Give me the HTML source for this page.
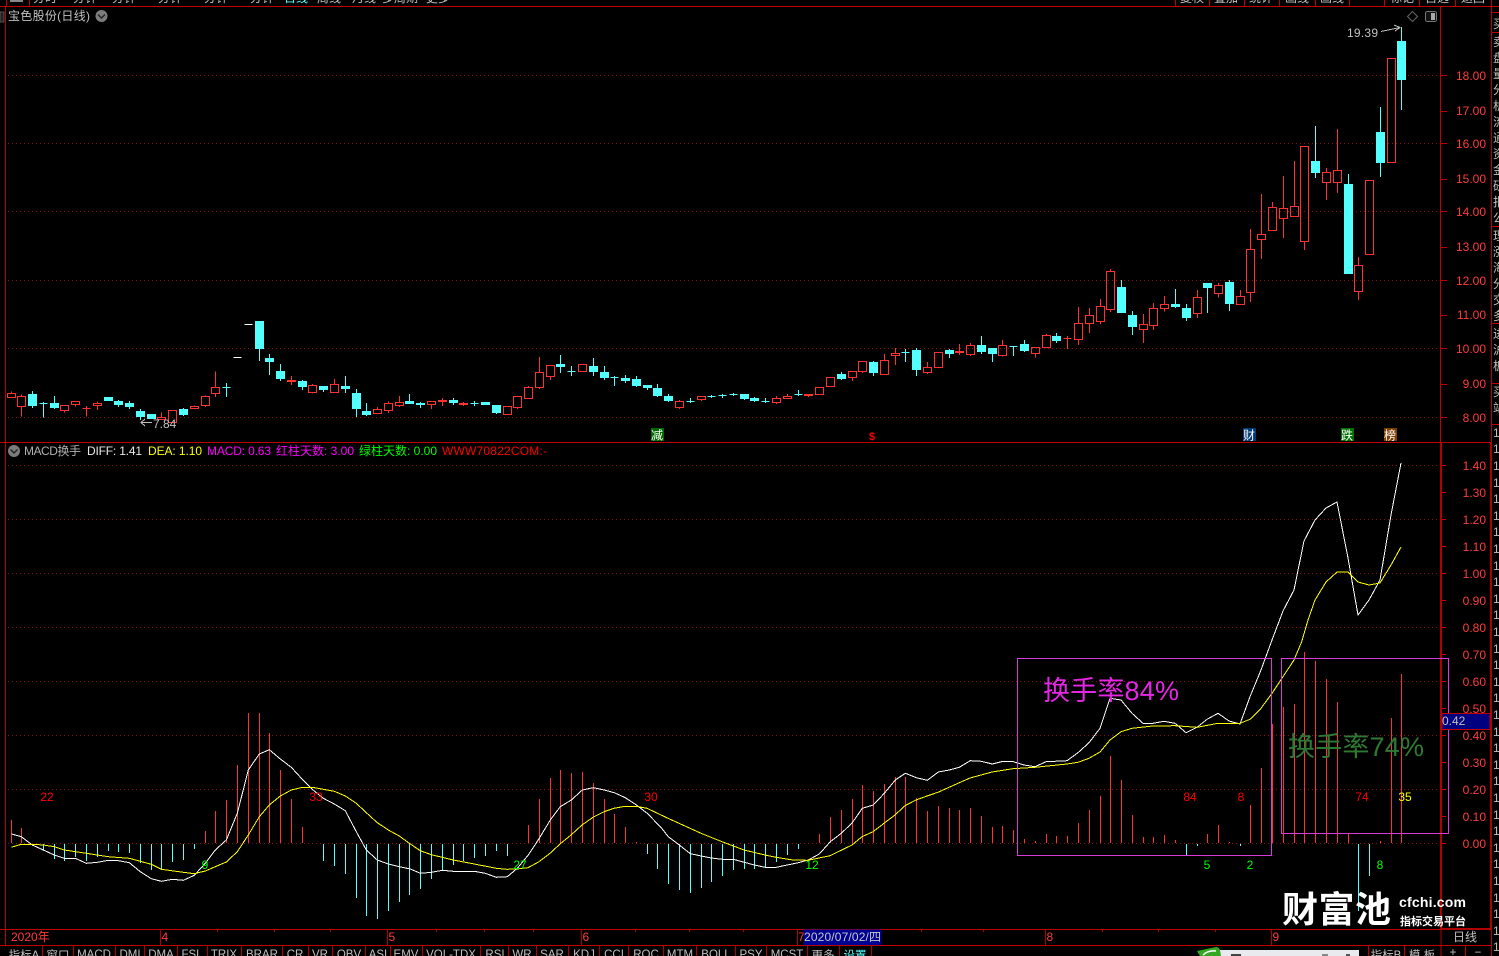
<!DOCTYPE html>
<html><head><meta charset="utf-8"><title>宝色股份</title>
<style>
html,body{margin:0;padding:0;background:#000;width:1499px;height:956px;overflow:hidden}
svg{display:block;position:absolute;left:0;top:0}
text{font-family:"Liberation Sans","WenQuanYi Zen Hei","Noto Sans CJK SC",sans-serif;font-size:12px}
.ax text{fill:#ff3c3c;text-anchor:end}
.tb text{fill:#c0c0c0;text-anchor:middle;font-size:11.5px}
.n text{font-size:12px;text-anchor:middle}
</style></head><body>
<svg width="1499" height="956" viewBox="0 0 1499 956" xmlns="http://www.w3.org/2000/svg" shape-rendering="crispEdges">
<rect width="1499" height="956" fill="#000"/>
<!-- grid -->
<path d="M8 75.5H1438M8 143.5H1438M8 211.5H1438M8 280.5H1438M8 348.5H1438M8 417.5H1438M8 465.5H1438M8 519.5H1438M8 573.5H1438M8 627.5H1438M8 681.5H1438M8 735.5H1438M8 789.5H1438M8 843.5H1438" stroke="#8a1010" stroke-dasharray="1 3" fill="none"/>
<!-- frame -->
<path d="M0 6.5H1499M5.5 7V945M0 442.5H1491M0 929.5H1491M0 945.5H1491M1440.5 7V442M1491.5 0V956M1441 945V956M1465.5 945V956M1404.5 945V956M1368.5 945V956M6.5 0V6M29.5 0V6M1175.5 0V6M1209.5 0V6M1244.5 0V6M1279.5 0V6M1315.5 0V6M1349.5 0V6M1384.5 0V6M1419.5 0V6M1455.5 0V6M1491.5 12.5H1499M1491.5 32.5H1499M1491.5 226.5H1499M1491.5 323.5H1499M1491.5 383.5H1499M1491.5 424.5H1499" stroke="#c00000" fill="none"/>
<path d="M1441 443V929M1491 443V929M1441 929H1491" stroke="#b00000" stroke-width="2" fill="none"/>
<path d="M42.5 945V956M73.5 945V956M115.5 945V956M144.5 945V956M177.5 945V956M207.5 945V956M241.5 945V956M282.5 945V956M308.5 945V956M332.5 945V956M365.5 945V956M390.5 945V956M422.5 945V956M480.5 945V956M508.5 945V956M536.5 945V956M568.5 945V956M599.5 945V956M628.5 945V956M663.5 945V956M696.5 945V956M735.5 945V956M766.5 945V956M807.5 945V956M839.5 945V956M871.5 945V956M160.5 930V945M387.5 930V945M581.5 930V945M797.5 930V945M1045.5 930V945M1271.5 930V945M1441 930V945M217.5 930V932M274.5 930V932M330.5 930V932M436.5 930V932M484.5 930V932M533.5 930V932M635.5 930V932M689.5 930V932M743.5 930V932M921.5 930V932M983.5 930V932M1102.5 930V932M1158.5 930V932M1215.5 930V932" stroke="#b00000" fill="none"/>
<!-- axis ticks -->
<path d="M1441 75.5h6M1441 111.5h6M1441 143.5h6M1441 179.5h6M1441 211.5h6M1441 247.5h6M1441 280.5h6M1441 315.5h6M1441 348.5h6M1441 384.5h6M1441 417.5h6M1442 465.5h4M1442 492.5h4M1442 519.5h4M1442 546.5h4M1442 573.5h4M1442 600.5h4M1442 627.5h4M1442 654.5h4M1442 681.5h4M1442 708.5h4M1442 735.5h4M1442 762.5h4M1442 789.5h4M1442 816.5h4M1442 843.5h4" stroke="#c00000" fill="none"/>
<!-- red candles -->
<path fill="none" stroke="#ff3232" d="M11.5 391.5V393.5M7.5 393.5h8v4h-8zM21.5 394.5V396.5M21.5 406.5V416.5M17.5 396.5h8v10h-8zM64.5 410.5V412.5M60.5 405.5h8v5h-8zM75.5 404.5V406.5M71.5 401.5h8v3h-8zM82.5 408.5h8M86.5 406V416.5M97.5 401.5V403.5M97.5 405.5V410M93.5 403.5h8v2h-8zM161.5 412.5V417.5M157.5 417.5h8v2h-8zM168.5 410.5h8v12h-8zM194.5 405.5V406.5M190.5 406.5h8v2h-8zM205.5 395.5V396.5M205.5 405.5V407M201.5 396.5h8v9h-8zM215.5 371.5V387.5M215.5 393.5V397M211.5 387.5h8v6h-8zM291.5 376V385M287.5 380.5h8v1h-8zM312.5 384V385.5M312.5 392.5V393.5M308.5 385.5h8v7h-8zM334.5 379V384.5M330.5 384.5h8v8h-8zM377.5 407V409.5M373.5 409.5h8v4h-8zM388.5 401.5V403.5M388.5 410.5V413M384.5 403.5h8v7h-8zM399.5 396V402.5M399.5 405.5V407M395.5 402.5h8v3h-8zM431.5 404.5V409M427.5 401.5h8v3h-8zM442.5 398V406M438.5 400.5h8v1h-8zM463.5 402V406M459.5 403.5h8v1h-8zM507.5 406.5h-4v8h8v-8zM517.5 407.5V409M513.5 396.5h8v11h-8zM528.5 386V387.5M524.5 387.5h8v11h-8zM539.5 357V372.5M539.5 387.5V389M535.5 372.5h8v15h-8zM550.5 376.5V380M546.5 365.5h8v11h-8zM578.5 364.5h8v7h-8zM679.5 400V401.5M679.5 407.5V409M675.5 401.5h8v6h-8zM701.5 399.5V401M697.5 396.5h8v3h-8zM776.5 396V398.5M776.5 402.5V404M772.5 398.5h8v4h-8zM787.5 394V396.5M783.5 396.5h8v2h-8zM808.5 394.5V397M804.5 394.5h8v1h-8zM815.5 387.5h8v7h-8zM826.5 377.5h8v9h-8zM852.5 377.5V381M848.5 371.5h8v6h-8zM862.5 371.5V373M858.5 361.5h8v10h-8zM884.5 354V360.5M880.5 360.5h8v14h-8zM895.5 348V353.5M895.5 355.5V365M891.5 353.5h8v2h-8zM927.5 362V367.5M927.5 372.5V374M923.5 367.5h8v5h-8zM934.5 352.5h8v15h-8zM959.5 344V355M955.5 351.5h8v1h-8zM970.5 343V345.5M970.5 354.5V356M966.5 345.5h8v9h-8zM1002.5 340V345.5M1002.5 355.5V356.5M998.5 345.5h8v10h-8zM1035.5 353.5V357.5M1031.5 347.5h8v6h-8zM1046.5 334V335.5M1042.5 335.5h8v12h-8zM1067.5 336V349M1063.5 338.5h8M1078.5 307V323.5M1078.5 339.5V345M1074.5 323.5h8v16h-8zM1089.5 308V315.5M1089.5 323.5V333M1085.5 315.5h8v8h-8zM1100.5 299V306.5M1100.5 321.5V324M1096.5 306.5h8v15h-8zM1110.5 269V271.5M1110.5 309.5V312M1106.5 271.5h8v38h-8zM1143.5 314V324.5M1143.5 329.5V343M1139.5 324.5h8v5h-8zM1153.5 303V308.5M1153.5 325.5V330M1149.5 308.5h8v17h-8zM1164.5 296V304.5M1164.5 308.5V311.5M1160.5 304.5h8v4h-8zM1197.5 290V297.5M1197.5 313.5V318M1193.5 297.5h8v16h-8zM1218.5 283V285.5M1218.5 293.5V297.5M1214.5 285.5h8v8h-8zM1240.5 290V296.5M1236.5 296.5h8v8h-8zM1250.5 229V249.5M1250.5 292.5V302M1246.5 249.5h8v43h-8zM1261.5 194V234.5M1261.5 239.5V259M1257.5 234.5h8v5h-8zM1272.5 202V207.5M1268.5 207.5h8v23h-8zM1283.5 176V208.5M1283.5 218.5V238M1279.5 208.5h8v10h-8zM1294.5 161V206.5M1290.5 206.5h8v10h-8zM1304.5 241.5V250M1300.5 146.5h8v95h-8zM1326.5 168V172.5M1326.5 182.5V200M1322.5 172.5h8v10h-8zM1337.5 129V170.5M1337.5 182.5V193M1333.5 170.5h8v12h-8zM1358.5 257V265.5M1358.5 291.5V300M1354.5 265.5h8v26h-8zM1365.5 180.5h8v74h-8zM1387.5 58.5h8v104h-8z"/>
<!-- cyan candles -->
<path fill="#54ffff" stroke="#54ffff" d="M32.5 391V408M28.5 394.5h8v11h-8zM43.5 402V417.5M39.5 403.5h8M54.5 396V409M50.5 403.5h8v4h-8zM104.5 397.5h8v3h-8zM118.5 400V407M114.5 401.5h8v3h-8zM129.5 401V409M125.5 403.5h8v3h-8zM140.5 409V420M136.5 411.5h8v5h-8zM147.5 414.5h8v4h-8zM183.5 408V416M179.5 409.5h8v5h-8zM226.5 383V397M222.5 387.5h8M259.5 321V361M255.5 321.5h8v27h-8zM269.5 354V375M265.5 358.5h8v3h-8zM280.5 364V381M276.5 371.5h8v7h-8zM302.5 380V390M298.5 381.5h8v5h-8zM323.5 386V392M319.5 386.5h8v3h-8zM345.5 376V393M341.5 386.5h8v2h-8zM356.5 389V417M352.5 393.5h8v15h-8zM366.5 403V416M362.5 411.5h8v3h-8zM409.5 394V404M405.5 401.5h8v2h-8zM420.5 402V408M416.5 403.5h8v1h-8zM453.5 398V405M449.5 400.5h8v2h-8zM474.5 401V406M470.5 403.5h8M481.5 402.5h8v2h-8zM496.5 405V414M492.5 405.5h8v7h-8zM560.5 355V373M556.5 364.5h8v2h-8zM571.5 366V376M567.5 371.5h8M593.5 358V376M589.5 366.5h8v5h-8zM604.5 366V380M600.5 372.5h8v5h-8zM614.5 376V386M610.5 377.5h8M625.5 375V383M621.5 378.5h8v2h-8zM636.5 376V387M632.5 379.5h8v6h-8zM647.5 385V390M643.5 385.5h8v2h-8zM657.5 384V397M653.5 388.5h8v7h-8zM668.5 394V402M664.5 396.5h8v4h-8zM690.5 398V403M686.5 401.5h8M711.5 395V398M707.5 396.5h8M722.5 394V398M718.5 395.5h8M733.5 393V396M729.5 394.5h8M744.5 394V400M740.5 394.5h8v4h-8zM754.5 397V402M750.5 398.5h8v2h-8zM765.5 398V403M761.5 401.5h8M798.5 390V396M794.5 394.5h8M841.5 372V380M837.5 374.5h8v4h-8zM873.5 361V376M869.5 362.5h8v10h-8zM905.5 349V362M901.5 352.5h8M916.5 348V376M912.5 350.5h8v19h-8zM949.5 349V358M945.5 350.5h8v3h-8zM981.5 336V354M977.5 345.5h8v6h-8zM992.5 348V362M988.5 348.5h8v5h-8zM1013.5 346V356M1009.5 346.5h8M1024.5 340V352M1020.5 344.5h8v6h-8zM1056.5 333V343M1052.5 336.5h8v4h-8zM1121.5 280V313M1117.5 287.5h8v25h-8zM1132.5 311V335M1128.5 315.5h8v11h-8zM1175.5 289V308M1171.5 304.5h8v2h-8zM1186.5 304V321M1182.5 308.5h8v9h-8zM1207.5 283V313M1203.5 283.5h8v4h-8zM1229.5 280V311M1225.5 282.5h8v21h-8zM1315.5 126V178M1311.5 161.5h8v11h-8zM1348.5 174V274M1344.5 184.5h8v89h-8zM1380.5 107V177M1376.5 132.5h8v30h-8zM1401.5 27V110M1397.5 41.5h8v38h-8z"/>
<path stroke="#fff" fill="none" d="M233.5 357.5h8M244.5 324.5h8"/>
<!-- MACD bars red -->
<path stroke="#ff3232" fill="none" d="M11.5 843V820M21.5 843V828M205.5 843V831M215.5 843V811M226.5 843V800M237.5 843V765M248.5 843V713M259.5 843V713M269.5 843V733M280.5 843V770M291.5 843V799M302.5 843V827M528.5 843V825M539.5 843V799M550.5 843V778M560.5 843V770M571.5 843V773M582.5 843V772M593.5 843V783M604.5 843V799M614.5 843V814M625.5 843V827M636.5 843V842M819.5 843V834M830.5 843V817M841.5 843V810M852.5 843V799M862.5 843V785M873.5 843V791M884.5 843V784M895.5 843V777M905.5 843V777M916.5 843V798M927.5 843V811M938.5 843V806M949.5 843V808M959.5 843V810M970.5 843V808M981.5 843V816M992.5 843V827M1002.5 843V826M1013.5 843V830M1024.5 843V839M1035.5 843V841M1046.5 843V834M1056.5 843V836M1067.5 843V836M1078.5 843V823M1089.5 843V810M1100.5 843V796M1110.5 843V756M1121.5 843V780M1132.5 843V815M1143.5 843V837M1153.5 843V837M1164.5 843V835M1175.5 843V840M1207.5 843V834M1218.5 843V825M1229.5 843V842M1250.5 843V805M1261.5 843V768M1272.5 843V724M1283.5 843V707M1294.5 843V704M1304.5 843V652M1315.5 843V661M1326.5 843V679M1337.5 843V702M1348.5 843V834M1380.5 843V841M1391.5 843V718M1401.5 843V674"/>
<path stroke="#ff3232" stroke-width="2" d="M1272 843V724" fill="none"/>
<!-- MACD bars cyan -->
<path stroke="#54ffff" fill="none" d="M43.5 844V850M54.5 844V859M64.5 844V861M75.5 844V857M86.5 844V861M97.5 844V857M108.5 844V851M118.5 844V852M129.5 844V853M140.5 844V863M151.5 844V870M161.5 844V870M172.5 844V862M183.5 844V860M194.5 844V849M323.5 844V861M334.5 844V866M345.5 844V874M356.5 844V898M366.5 844V916M377.5 844V919M388.5 844V911M399.5 844V902M409.5 844V895M420.5 844V889M431.5 844V879M442.5 844V870M453.5 844V865M463.5 844V861M474.5 844V858M485.5 844V856M496.5 844V851M507.5 844V856M647.5 844V854M657.5 844V869M668.5 844V884M679.5 844V890M690.5 844V893M701.5 844V888M711.5 844V882M722.5 844V876M733.5 844V870M744.5 844V869M754.5 844V869M765.5 844V868M776.5 844V862M787.5 844V855M798.5 844V849M1186.5 844V855M1197.5 844V846M1240.5 844V846M1358.5 844V911M1369.5 844V876"/>
<!-- lines -->
<g fill="none" stroke-linejoin="round">
<path stroke="#fff" stroke-width="1" d="M11.5 834L21.3 836.7L32.3 845L43.3 850L54.3 855L64.3 858.3L75.3 858.3L86.3 863.3L97.3 862.3L108.3 860.3L118.3 860.7L129.3 862.7L140.3 871.7L151.3 878.7L161.3 881.3L172.3 879.3L183.3 880.3L194.3 875.3L205.3 863.3L215.3 850L226.3 840L237.3 813.3L248.3 770L259.3 754L269.3 749.7L280.3 759L291.3 767.3L302.3 779.3L312.3 789.3L323.3 798.3L334.3 804L345.3 810.7L356.3 831.7L366.3 850L377.3 860L388.3 864L399.3 866.7L410.3 869L420.3 873.3L431.3 872.3L442.3 870.3L453.3 871.3L463.3 871.3L474.3 871.3L485.3 873.3L496.3 877.3L507.3 876.7L517.3 868.3L528.3 855L539.3 838.3L550.3 820L560.3 806.7L571.3 800L582.3 790L593.3 787.7L604.3 790L614.3 792.7L625.3 797.7L636.3 805L647.3 813.3L661.7 828.3L668.3 836.7L679.3 845L690.3 853.7L701.3 856L711.3 858L722.3 859.3L733.3 859.3L744.3 862.3L754.3 865L765.3 867.3L776.3 867.3L787.3 865L798.3 862.7L808.3 860L819.3 854L830.3 841.7L841.3 833.3L852.3 822.7L862.3 808.3L873.3 805L884.3 793.3L895.3 780L905.3 773.3L916.3 777.7L927.3 780.3L938.3 772L949.3 770L959.3 767.3L970.3 760.7L981.3 761.3L992.3 764L1002.3 761.5L1013.3 761.7L1024 765L1035 766.7L1046 761.7L1067 760.7L1078 752.7L1089 742.7L1100 728.3L1110 698.3L1121 700L1132 713.3L1143 723.3L1153 723.3L1164 721.3L1175 723.3L1186 732.7L1197 727.3L1207 719.3L1218 713.3L1229 721L1240 724L1250 696.7L1261 670L1272 640L1283 611L1294 590L1304 541L1315 520L1326 508L1337 502L1348 558L1358 615L1369 600L1380 580L1391 515L1401 463"/>
<path stroke="#ffff00" stroke-width="1" d="M11.3 847.3L21.3 844.3L32.3 844.3L43.3 845L54.3 846.7L64.3 850L86.3 853.3L108.3 856.7L129.3 858.3L151.3 864.3L161.3 869.3L183.3 872.3L194.3 873.7L205.3 871L215.3 866.7L226.3 862L237.3 851.7L248.3 835L259.3 816.7L269.3 805L280.3 796L291.3 790L302.3 787.3L312.3 787.3L334.3 791.3L345.3 796L356.3 803.3L366.3 812.7L377.3 822.7L388.3 830L399.3 836L410.3 844L420.3 850.7L431.3 854.7L453.3 860L474.3 864L496.3 868.3L507 869.3L517 869L528 867.7L539 861.7L550 853.3L560 844L571 835L582 825L593 817.3L604 811.7L614 808.3L625 806.3L636 806.3L647 808.3L668 818.3L679 823.3L701 833.3L722 841.7L744 850L765 855L776 857.3L793 860L808 860.3L830 855.7L852 845L862 836.7L873 831.7L884 823.3L895 815L905 805.7L916 800L927 796L938 792.3L949 787.3L970 778L981 775L992 772L1013 768.7L1035 767.3L1067 764L1078 762.3L1089 758.3L1100 752L1110 740L1121 731.7L1132 728.3L1153 726L1175 725.7L1197 727.3L1218 723.3L1240 723.3L1250 719.3L1261 708.3L1272 693.3L1283 676.7L1294 660L1301.7 641.7L1308 620L1315 600L1326 582L1337 572L1348 572L1358 582L1369 585L1380 583L1391 565L1401 547"/>
<path stroke="#c0c0c0" d="M1381 31.5L1400 27.5M1394 25L1400 27.5L1395 31M142 422.5H152M145 419L141 422.5L145 426"/>
</g>
<!-- magenta boxes -->
<rect x="1017.5" y="658.5" width="254" height="197" fill="none" stroke="#d93ad9"/>
<rect x="1281.5" y="658.5" width="167" height="175" fill="none" stroke="#d93ad9"/>
<g shape-rendering="auto">
<text x="1043" y="700" style="font-size:27px" fill="#e626e6" textLength="136">换手率84%</text>
<text x="1288" y="756" style="font-size:27px" fill="#2f7a33" textLength="136">换手率74%</text>
</g>
<!-- number labels -->
<g class="n">
<text x="47" y="801" fill="#f00">22</text><text x="316" y="801" fill="#f00">33</text><text x="651" y="801" fill="#f00">30</text><text x="1190" y="801" fill="#f00">84</text><text x="1241" y="801" fill="#f00">8</text><text x="1362" y="801" fill="#f00">74</text><text x="1405" y="801" fill="#ff0">35</text>
<text x="205" y="869" fill="#0f0">9</text><text x="520" y="869" fill="#0f0">27</text><text x="812" y="869" fill="#0f0">12</text><text x="1207" y="869" fill="#0f0">5</text><text x="1250" y="869" fill="#0f0">2</text><text x="1380" y="869" fill="#0f0">8</text>
</g>
<!-- axis labels -->
<g class="ax">
<text x="1486" y="80">18.00</text><text x="1486" y="115">17.00</text><text x="1486" y="148">16.00</text><text x="1486" y="183">15.00</text><text x="1486" y="216">14.00</text><text x="1486" y="251">13.00</text><text x="1486" y="285">12.00</text><text x="1486" y="319">11.00</text><text x="1486" y="353">10.00</text><text x="1486" y="388">9.00</text><text x="1486" y="422">8.00</text>
<text x="1486" y="470">1.40</text><text x="1486" y="497">1.30</text><text x="1486" y="524">1.20</text><text x="1486" y="551">1.10</text><text x="1486" y="578">1.00</text><text x="1486" y="605">0.90</text><text x="1486" y="632">0.80</text><text x="1486" y="659">0.70</text><text x="1486" y="686">0.60</text><text x="1486" y="713">0.50</text><text x="1486" y="740">0.40</text><text x="1486" y="767">0.30</text><text x="1486" y="794">0.20</text><text x="1486" y="821">0.10</text><text x="1486" y="848">0.00</text>
</g>
<rect x="1442" y="713.5" width="48" height="16" fill="#000080" stroke="#c00000" stroke-width="1"/>
<text x="1442" y="725" fill="#c0c0c0">0.42</text>
<!-- titles -->
<text x="8" y="20" fill="#c0c0c0" textLength="82">宝色股份(日线)</text>
<circle cx="101.5" cy="16" r="6" fill="#7c7c7c" shape-rendering="auto"/>
<path d="M98 14.5L101.5 18L105 14.5" stroke="#222" stroke-width="1.4" fill="none" shape-rendering="auto"/>
<circle cx="14" cy="451" r="6" fill="#7c7c7c" shape-rendering="auto"/>
<path d="M10.5 449.5L14 453L17.5 449.5" stroke="#222" stroke-width="1.4" fill="none" shape-rendering="auto"/>
<text x="24" y="455" fill="#b0b0b0" textLength="57">MACD换手</text>
<text x="87" y="455" fill="#e8e8e8" textLength="55">DIFF: 1.41</text>
<text x="148" y="455" fill="#ffff00" textLength="54">DEA: 1.10</text>
<text x="207" y="455" fill="#ff00ff" textLength="64">MACD: 0.63</text>
<text x="276" y="455" fill="#ff00ff" textLength="78">红柱天数: 3.00</text>
<text x="359" y="455" fill="#00ff00" textLength="78">绿柱天数: 0.00</text>
<text x="442" y="455" fill="#ff0000" textLength="105">WWW70822COM:-</text>
<!-- price notes -->
<text x="1347" y="37" fill="#c0c0c0" textLength="31">19.39</text>
<text x="153" y="428" fill="#c0c0c0">7.84</text>
<path d="M1412.5 11.5l5 5l-5 5l-5-5z" fill="none" stroke="#666" shape-rendering="auto"/>
<rect x="1425.5" y="11.5" width="11" height="10" rx="2" fill="#111" stroke="#777"/>
<rect x="1431" y="13" width="4" height="7" fill="#aaa"/>
<!-- markers -->
<rect x="651" y="428" width="13" height="13" fill="#006a00"/><text x="651" y="439.500" fill="#fff">减</text>
<text x="872" y="440" fill="#f00" text-anchor="middle" style="font-weight:bold;font-size:11px">$</text>
<rect x="1243" y="428" width="13" height="13" fill="#003a78"/><text x="1243" y="439.500" fill="#fff">财</text>
<rect x="1341" y="428" width="13" height="13" fill="#007000"/><text x="1341" y="439.500" fill="#fff">跌</text>
<rect x="1384" y="428" width="13" height="13" fill="#7c3e00"/><text x="1384" y="439.500" fill="#fff">榜</text>
<!-- date row -->
<text x="11" y="941" fill="#ff3c3c">2020年</text>
<text x="161.500" y="941" fill="#ff3c3c">4</text><text x="388.500" y="941" fill="#ff3c3c">5</text><text x="582.500" y="941" fill="#ff3c3c">6</text><text x="798" y="941" fill="#ff3c3c">7</text><text x="1046.500" y="941" fill="#ff3c3c">8</text><text x="1272.500" y="941" fill="#ff3c3c">9</text>
<rect x="803.5" y="929.5" width="78" height="15.500" fill="#000090"/>
<text x="804" y="941" fill="#c8c8c8" textLength="77">2020/07/02/四</text>
<text x="1453" y="941" fill="#c0c0c0">日线</text>
<!-- watermark -->
<g shape-rendering="auto" fill="#fff">
<text x="1282" y="922" style="font-size:36px;font-weight:bold" textLength="109">财富池</text>
<text x="1399" y="907" style="font-size:14px;font-weight:bold" textLength="67">cfchi.com</text>
<text x="1400" y="925" style="font-size:11px;font-weight:bold">指标交易平台</text>
</g>
<!-- tab row -->
<g class="tb">
<text x="24" y="959">指标A</text><text x="58" y="959">窗口</text><text x="94" y="958">MACD</text><text x="130" y="958">DMI</text><text x="161" y="958">DMA</text><text x="192" y="958">FSL</text><text x="224" y="958">TRIX</text><text x="262" y="958">BRAR</text><text x="295" y="958">CR</text><text x="320" y="958">VR</text><text x="349" y="958">OBV</text><text x="378" y="958">ASI</text><text x="406" y="958">EMV</text><text x="451" y="958">VOL-TDX</text><text x="495" y="958">RSI</text><text x="522" y="958">WR</text><text x="552" y="958">SAR</text><text x="584" y="958">KDJ</text><text x="614" y="958">CCI</text><text x="646" y="958">ROC</text><text x="680" y="958">MTM</text><text x="716" y="958">BOLL</text><text x="751" y="958">PSY</text><text x="787" y="958">MCST</text><text x="823" y="959">更多</text><text x="855" y="959" style="fill:#54ffff">设置</text>
<text x="1386" y="959">指标B</text><text x="1422" y="959">模 板</text><text x="1453" y="956">+</text><text x="1478" y="956">−</text>
</g>
<!-- popup fragment -->
<rect x="1220" y="950" width="139" height="6" fill="#e8eaee"/>
<rect x="1231" y="954" width="10" height="2" fill="#444"/><rect x="1322" y="954" width="6" height="2" fill="#888"/><rect x="1346" y="954" width="4" height="2" fill="#555"/>
<path d="M1197 951L1216 947Q1219 947 1220 950L1221 956H1200Z" fill="#35a821" shape-rendering="auto"/>
<path d="M1203 955Q1208 950 1216 951" stroke="#fff" fill="none" stroke-width="1.500" shape-rendering="auto"/>
<!-- top row clipped text -->
<g fill="#c0c0c0" text-anchor="middle">
<text x="45" y="2">分时</text><text x="85" y="2">分钟</text><text x="124" y="2">分钟</text><text x="170" y="2">分钟</text><text x="216" y="2">分钟</text><text x="262" y="2">分钟</text><text x="296" y="2" fill="#54ffff">日线</text><text x="329" y="2">周线</text><text x="364" y="2">月线</text><text x="400" y="2">多周期</text><text x="438" y="2">更多</text>
<text x="1192" y="2">复权</text><text x="1226" y="2">叠加</text><text x="1261" y="2">统计</text><text x="1297" y="2">画线</text><text x="1332" y="2">画线</text><text x="1402" y="2">标记</text><text x="1437" y="2">自选</text><text x="1473" y="2">返回</text>
</g>
<rect x="10" y="0" width="13" height="2" fill="#888"/>
<rect x="0" y="12" width="4" height="10" fill="#222" stroke="#555"/>
<!-- right strip clipped -->
<g fill="#c0c0c0">
<text x="1493" y="28">买</text><text x="1493" y="46">卖</text><text x="1493" y="62">盘</text><text x="1493" y="78">量</text><text x="1493" y="94">分</text><text x="1493" y="110">析</text><text x="1493" y="126">流</text><text x="1493" y="142">通</text><text x="1493" y="158">资</text><text x="1493" y="174">金</text><text x="1493" y="190">研</text><text x="1493" y="206">报</text><text x="1493" y="222">公</text><text x="1493" y="240">理</text><text x="1493" y="256">涨</text><text x="1493" y="272">海</text><text x="1493" y="288">分</text><text x="1493" y="304">交</text><text x="1493" y="320">多</text><text x="1493" y="338">进</text><text x="1493" y="354">沪</text><text x="1493" y="370">板</text><text x="1493" y="396">买</text><text x="1493" y="412">站</text>
<text x="1493" y="437">1</text><text x="1493" y="453">1</text><text x="1493" y="470">1</text><text x="1493" y="487">1</text><text x="1493" y="503">1</text><text x="1493" y="520">1</text><text x="1493" y="536">1</text><text x="1493" y="553">1</text><text x="1493" y="570">1</text><text x="1493" y="586">1</text><text x="1493" y="603">1</text><text x="1493" y="619">1</text><text x="1493" y="636">1</text><text x="1493" y="653">1</text><text x="1493" y="669">1</text><text x="1493" y="686">1</text><text x="1493" y="702">1</text><text x="1493" y="719">1</text><text x="1493" y="736">1</text><text x="1493" y="752">1</text><text x="1493" y="769">1</text><text x="1493" y="785">1</text><text x="1493" y="802">1</text><text x="1493" y="819">1</text><text x="1493" y="835">1</text><text x="1493" y="852">1</text><text x="1493" y="868">1</text><text x="1493" y="885">1</text><text x="1493" y="902">1</text><text x="1493" y="918">1</text><text x="1493" y="935">1</text><text x="1493" y="951">1</text>
</g>
</svg>
</body></html>
